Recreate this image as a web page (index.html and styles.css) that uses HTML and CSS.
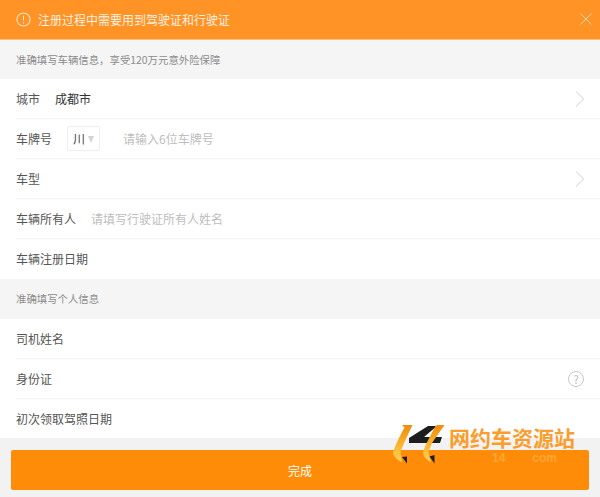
FILE: index.html
```html
<!DOCTYPE html>
<html lang="zh">
<head>
<meta charset="utf-8">
<title>注册</title>
<link rel="stylesheet" href="styles.css">
</head>
<body>
<div class="page">
  <div class="notice">
    <svg class="notice-icon" viewBox="0 0 16 16"><circle cx="8" cy="8" r="7"/><path d="M8 3.800v5.400"/><path d="M8 10.800v1.400"/></svg>
    <span class="notice-text">注册过程中需要用到驾驶证和行驶证</span>
    <svg class="notice-close" viewBox="0 0 12 12"><path d="M.5.5l11 11M11.500.5l-11 11"/></svg>
  </div>
  <div class="section">准确填写车辆信息，享受120万元意外险保障</div>
  <div class="group">
    <div class="row"><span class="label">城市</span><span class="value city">成都市</span>
      <svg class="chev" viewBox="0 0 9 16"><path d="M.6.6L8.200 8 .6 15.400"/></svg></div>
    <div class="row"><span class="label">车牌号</span>
      <span class="plate">川<i class="tri"></i></span>
      <span class="hint plate-hint">请输入6位车牌号</span></div>
    <div class="row"><span class="label">车型</span>
      <svg class="chev" viewBox="0 0 9 16"><path d="M.6.6L8.200 8 .6 15.400"/></svg></div>
    <div class="row"><span class="label">车辆所有人</span><span class="hint owner-hint">请填写行驶证所有人姓名</span></div>
    <div class="row last"><span class="label">车辆注册日期</span></div>
  </div>
  <div class="section tall">准确填写个人信息</div>
  <div class="group">
    <div class="row"><span class="label">司机姓名</span></div>
    <div class="row"><span class="label">身份证</span>
      <span class="help">?</span></div>
    <div class="row last short"><span class="label">初次领取驾照日期</span></div>
  </div>
  <div class="footer">
    <button class="done">完成</button>
    <div class="mark">
      <svg class="mark-logo" viewBox="0 0 60 44">
        <defs><linearGradient id="g" x1="0" y1="0" x2="0" y2="1"><stop offset="0" stop-color="#f08c0c"/><stop offset=".55" stop-color="#fbb52e"/><stop offset="1" stop-color="#fdd35e"/></linearGradient></defs>
        <path d="M38 3L47 3 34 14H52L50 20H19V15Z" fill="#1e1e1e"/>
        <path d="M12 2H22.500L14 20 10.500 29 12 39.500C7 36.500 3 33 3 30 3.500 27 10 12 14.500 4.500Z" fill="url(#g)"/>
        <path d="M12 34L17 33.500V40.500Z" fill="#1e1e1e"/>
        <path d="M45.500 3L47.500 2H54.500L42 20 38.500 29 41 39.500C36 36.500 33 33 33 29 35.500 22 41 11 45.500 3Z" fill="url(#g)"/>
        <path d="M39.500 33.500L44.500 32V40.500Z" fill="#1e1e1e"/>
      </svg>
      <span class="mark-name">网约车资源站</span>
      <span class="mark-url"><b>14</b><b>com</b></span>
    </div>
  </div>
</div>
</body>
</html>
```

FILE: styles.css
```css
* { box-sizing: border-box; }
html, body { margin: 0; padding: 0; }
body {
  width: 600px;
  height: 497px;
  overflow: hidden;
  background: #f2f2f2;
  font-family: "Noto Sans CJK SC", "Liberation Sans", sans-serif;
}
.page { display: flex; flex-direction: column; height: 497px; }
.notice {
  height: 40px;
  flex: none;
  display: flex;
  align-items: center;
  padding: 0 8px 1px 16px;
  background: #ff9325;
  border-bottom: 1px solid #ffc27d;
  color: #fff1e0;
  font-size: 12px;
}
.notice-icon { width: 15px; height: 15px; margin-right: 7px; fill: none; stroke: #ffe6cc; stroke-width: 1.100; }
.notice-text { flex: 1; }
.notice-close { width: 12px; height: 12px; fill: none; stroke: #ffd9b0; stroke-width: 1; }
.section {
  height: 39px;
  flex: none;
  display: flex;
  align-items: center;
  padding-left: 16px;
  background: #f5f5f5;
  color: #8c8c8c;
  font-size: 10.400px;
}
.section.tall { height: 40px; padding-bottom: 1px; }
.group { background: #fff; padding-left: 16px; }
.row {
  height: 40px;
  display: flex;
  align-items: center;
  padding-bottom: 1px;
  border-bottom: 1px solid #f5f5f5;
  font-size: 12px;
  color: #555;
  position: relative;
}
.row.last { border-bottom: 0; }
.row.short { height: 39px; }
.label { color: #555; }
.city { margin-left: 15px; color: #333; }
.plate {
  margin-left: 15px;
  width: 33px;
  height: 25px;
  display: flex;
  align-items: center;
  padding-left: 5px;
  border: 1px solid #eeeeee;
  border-radius: 2px;
  color: #444;
}
.tri {
  margin-left: 3px;
  margin-top: 2px;
  border-left: 3.500px solid transparent;
  border-right: 3.500px solid transparent;
  border-top: 7px solid #d4d4d4;
}
.hint { color: #bdbdbd; }
.plate-hint { margin-left: 23px; }
.owner-hint { margin-left: 15px; }
.chev {
  position: absolute;
  right: 15px;
  top: 12px;
  width: 10px;
  height: 16px;
  fill: none;
  stroke: #cfcfcf;
  stroke-width: 1;
}
.help {
  position: absolute;
  right: 16px;
  top: 12px;
  width: 16px;
  height: 16px;
  display: flex;
  align-items: center;
  justify-content: center;
  border: 1px solid #c8c8c8;
  border-radius: 50%;
  color: #bbb;
  font-size: 11px;
  line-height: 1;
}
.footer {
  flex: 1;
  position: relative;
  padding: 12px 11px 7px;
  background: #f2f2f2;
}
.done {
  display: block;
  width: 100%;
  height: 40px;
  border: 0;
  border-radius: 2px;
  background: #ff8c08;
  color: #fff;
  font-family: inherit;
  font-size: 12px;
}
.mark { position: absolute; left: 390px; top: -15px; width: 200px; height: 52px; }
.mark-logo { position: absolute; left: 0; top: 0; width: 60px; height: 44px; }
.mark-name {
  position: absolute;
  left: 59px;
  top: 1px;
  color: #fb9d2c;
  font-size: 21px;
  font-weight: 700;
  line-height: 26px;
  white-space: nowrap;
}
.mark-url {
  position: absolute;
  left: 102px;
  top: 28px;
  width: 65px;
  display: flex;
  justify-content: space-between;
  color: #ffa733;
  font-family: "Liberation Sans", sans-serif;
  font-size: 12px;
  line-height: 14px;
}
.mark-url b { font-weight: 700; }
```
